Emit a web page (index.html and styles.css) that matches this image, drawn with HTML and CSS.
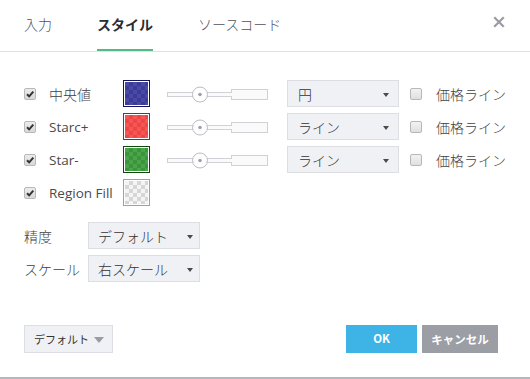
FILE: index.html
```html
<!DOCTYPE html>
<html lang="ja">
<head>
<meta charset="utf-8">
<title>スタイル</title>
<link rel="stylesheet" href="styles.css">
</head>
<body>
<div class="dialog">
  <div class="header">
    <div class="tabs">
      <div class="tab">入力</div>
      <div class="tab active">スタイル</div>
      <div class="tab">ソースコード</div>
    </div>
    <svg class="close" width="12" height="12" viewBox="0 0 12 12"><path d="M2 2L10 10M10 2L2 10" stroke="#9a9ca4" stroke-width="2.2" stroke-linecap="square"/></svg>
  </div>

  <div class="content">
    <div class="row">
      <span class="cb checked"><svg width="10" height="10" viewBox="0 0 10 10"><path d="M2 5.2L4.2 7.4L8.3 2.6" fill="none" stroke="#333" stroke-width="2"/></svg></span>
      <span class="label ja">中央値</span>
      <span class="swatch sw-blue"><span class="fill"></span></span>
      <svg class="slider" width="102" height="18" viewBox="0 0 102 18"><rect x="0.5" y="7.5" width="36" height="4" fill="#fafafa" stroke="#cfd1d6"/><rect x="64.5" y="4.5" width="36" height="10" fill="#fafafa" stroke="#cfd1d6"/><rect x="36.5" y="7.5" width="28" height="4" fill="#fafafa" stroke="#cfd1d6"/><rect x="63" y="8" width="3" height="3" fill="#fafafa"/><circle cx="33" cy="9.5" r="7.5" fill="#fff" stroke="#b9bcc4"/><circle cx="33" cy="9.5" r="1.8" fill="#9ea1a9"/></svg>
      <div class="select wide"><span>円</span><i class="arrow"></i></div>
      <span class="cb"></span>
      <span class="label2">価格ライン</span>
    </div>
    <div class="row">
      <span class="cb checked"><svg width="10" height="10" viewBox="0 0 10 10"><path d="M2 5.2L4.2 7.4L8.3 2.6" fill="none" stroke="#333" stroke-width="2"/></svg></span>
      <span class="label">Starc+</span>
      <span class="swatch sw-red"><span class="fill"></span></span>
      <svg class="slider" width="102" height="18" viewBox="0 0 102 18"><rect x="0.5" y="7.5" width="36" height="4" fill="#fafafa" stroke="#cfd1d6"/><rect x="64.5" y="4.5" width="36" height="10" fill="#fafafa" stroke="#cfd1d6"/><rect x="36.5" y="7.5" width="28" height="4" fill="#fafafa" stroke="#cfd1d6"/><rect x="63" y="8" width="3" height="3" fill="#fafafa"/><circle cx="33" cy="9.5" r="7.5" fill="#fff" stroke="#b9bcc4"/><circle cx="33" cy="9.5" r="1.8" fill="#9ea1a9"/></svg>
      <div class="select wide"><span>ライン</span><i class="arrow"></i></div>
      <span class="cb"></span>
      <span class="label2">価格ライン</span>
    </div>
    <div class="row">
      <span class="cb checked"><svg width="10" height="10" viewBox="0 0 10 10"><path d="M2 5.2L4.2 7.4L8.3 2.6" fill="none" stroke="#333" stroke-width="2"/></svg></span>
      <span class="label">Star-</span>
      <span class="swatch sw-green"><span class="fill"></span></span>
      <svg class="slider" width="102" height="18" viewBox="0 0 102 18"><rect x="0.5" y="7.5" width="36" height="4" fill="#fafafa" stroke="#cfd1d6"/><rect x="64.5" y="4.5" width="36" height="10" fill="#fafafa" stroke="#cfd1d6"/><rect x="36.5" y="7.5" width="28" height="4" fill="#fafafa" stroke="#cfd1d6"/><rect x="63" y="8" width="3" height="3" fill="#fafafa"/><circle cx="33" cy="9.5" r="7.5" fill="#fff" stroke="#b9bcc4"/><circle cx="33" cy="9.5" r="1.8" fill="#9ea1a9"/></svg>
      <div class="select wide"><span>ライン</span><i class="arrow"></i></div>
      <span class="cb"></span>
      <span class="label2">価格ライン</span>
    </div>
    <div class="row">
      <span class="cb checked"><svg width="10" height="10" viewBox="0 0 10 10"><path d="M2 5.2L4.2 7.4L8.3 2.6" fill="none" stroke="#333" stroke-width="2"/></svg></span>
      <span class="label">Region Fill</span>
      <span class="swatch sw-gray"><span class="fill"></span></span>
    </div>

    <div class="prop first">
      <span class="plabel">精度</span>
      <div class="select narrow"><span>デフォルト</span><i class="arrow"></i></div>
    </div>
    <div class="prop">
      <span class="plabel">スケール</span>
      <div class="select narrow"><span>右スケール</span><i class="arrow"></i></div>
    </div>
  </div>

  <div class="footer">
    <div class="defaults"><span>デフォルト</span><i class="arrow big"></i></div>
    <div class="buttons">
      <div class="btn ok">OK</div>
      <div class="btn cancel">キャンセル</div>
    </div>
  </div>
</div>
</body>
</html>
```

FILE: styles.css
```css
* { box-sizing: border-box; }
html, body { margin: 0; padding: 0; background: #fff; }
body {
  font-family: "Open Sans", "Noto Sans CJK JP", sans-serif;
  color: #4a4a4a;
  width: 530px;
  height: 379px;
  overflow: hidden;
}
.dialog {
  width: 530px;
  height: 379px;
  border-bottom: 2px solid #b5b7bc;
  display: flex;
  flex-direction: column;
}
.header {
  height: 52px;
  border-bottom: 1px solid #e0e1e5;
  display: flex;
  align-items: flex-start;
  justify-content: space-between;
  padding: 0 25px 0 24px;
}
.tabs { display: flex; gap: 45px; height: 51px; }
.tab {
  font-family: "Noto Sans CJK JP", sans-serif;
  font-size: 14px;
  font-weight: 300;
  color: #50535c;
  padding-top: 14px;
  height: 51px;
  line-height: 20px;
}
.tab.active {
  color: #2a2d35;
  font-weight: bold;
  border-bottom: 2px solid #53b987;
}
.close { margin-top: 16px; }

.content { padding: 28px 0 0 24px; display: flex; flex-direction: column; }
.row { display: flex; align-items: center; height: 27px; margin-bottom: 6px; }
.cb {
  width: 12px; height: 12px;
  border: 1px solid #b6b8bd;
  border-radius: 2px;
  background: linear-gradient(#f2f2f2, #e0e0e0);
  display: inline-flex; align-items: center; justify-content: center;
  flex: none;
}
.cb.checked { background: linear-gradient(#ececec, #d8d8d8); }
.label { margin-left: 13px; width: 74px; font-size: 13.5px; color: #4a4a4a; white-space: nowrap; }
.label.ja { font-family: "Noto Sans CJK JP", sans-serif; font-size: 14px; font-weight: 300; color: #3f3f3f; }
.swatch {
  width: 27px; height: 27px;
  border: 1px solid;
  padding: 1px;
  background: #fff;
  flex: none;
}
.fill { display: block; width: 100%; height: 100%; }
.sw-blue { border-color: #14145c; }
.sw-blue .fill { background: repeating-conic-gradient(#3c3c98 0 25%, #4a4aa6 0 50%) 0 0 / 8px 8px; }
.sw-red { border-color: #b51616; }
.sw-red .fill { background: repeating-conic-gradient(#ee4545 0 25%, #f55656 0 50%) 0 0 / 8px 8px; }
.sw-green { border-color: #0c4a0c; }
.sw-green .fill { background: repeating-conic-gradient(#3c953c 0 25%, #4aa44a 0 50%) 0 0 / 8px 8px; }
.sw-gray { border-color: #a0a0a0; }
.sw-gray .fill { background: repeating-conic-gradient(#d6d6d6 0 25%, #f4f4f4 0 50%) 0 0 / 8px 8px; }

.slider { margin-left: 17px; flex: none; }

.select {
  height: 27px;
  background: #f0f1f5;
  border: 1px solid #dcdee3;
  display: flex; align-items: center; justify-content: space-between;
  padding: 0 9px 0 10px;
  font-family: "Noto Sans CJK JP", sans-serif;
  font-size: 14px;
  font-weight: 300;
  color: #333;
}
.select.wide { width: 112px; margin-left: 18px; }
.select.narrow { width: 112px; padding-left: 9px; padding-right: 6px; }
.arrow {
  width: 0; height: 0;
  border-left: 3.5px solid transparent;
  border-right: 3.5px solid transparent;
  border-top: 4px solid #4a4a4a;
  margin-top: 2px;
}
.arrow.big {
  border-left-width: 5px; border-right-width: 5px; border-top-width: 6px;
  border-top-color: #9a9ca3; margin-top: 1px;
}
.row .cb:not(.checked) { margin-left: 11px; }
.label2 {
  margin-left: 14px;
  font-family: "Noto Sans CJK JP", sans-serif;
  font-size: 14px; font-weight: 300; color: #3f3f3f;
}

.prop { display: flex; align-items: center; height: 27px; margin-bottom: 6px; }
.prop.first { margin-top: 10px; }
.plabel { width: 64px; font-family: "Noto Sans CJK JP", sans-serif; font-size: 14px; font-weight: 300; color: #3f3f3f; }

.footer {
  margin-top: auto;
  padding: 0 32px 24px 24px;
  display: flex; justify-content: space-between; align-items: center;
}
.defaults {
  width: 89px; height: 28px;
  background: #f0f1f5;
  border: 1px solid #dcdee3;
  display: flex; align-items: center; justify-content: space-between;
  padding: 0 8px 0 9px;
  font-family: "Noto Sans CJK JP", sans-serif;
  font-size: 11px; color: #333;
}
.buttons { display: flex; gap: 5px; }
.btn {
  height: 28px;
  display: flex; align-items: center; justify-content: center;
  color: #fff; font-weight: bold; font-size: 11.5px;
  font-family: "Noto Sans CJK JP", sans-serif;
}
.ok { width: 71px; background: #3db4e5; padding-bottom: 3px; }
.cancel { width: 76px; background: #9c9ea5; }
```
